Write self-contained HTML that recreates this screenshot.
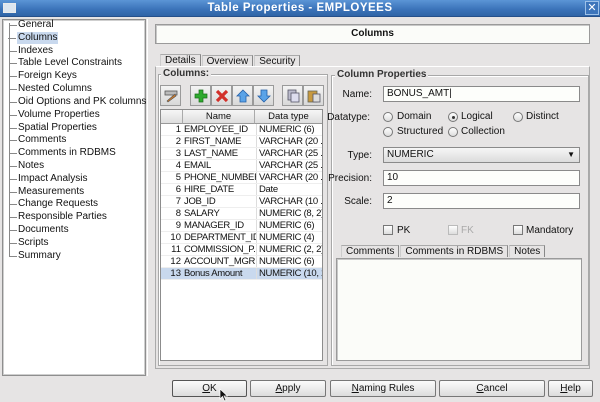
<!DOCTYPE html>
<html><head><meta charset="utf-8"><style>
*{margin:0;padding:0;box-sizing:border-box}
body{width:600px;height:402px;overflow:hidden;background:#e6e4e4;font-family:"Liberation Sans","DejaVu Sans",sans-serif;font-size:10px;color:#111;position:relative;white-space:nowrap}
.a{position:absolute}
#title{left:0;top:0;width:600px;height:17px;background:linear-gradient(#5b95d6,#3a72b8 60%,#2f64a6);border-bottom:1px solid #25508a}
#title span{position:absolute;left:0;width:600px;text-align:center;top:2px;color:#fff;font-weight:bold;font-size:11.5px;letter-spacing:.5px}
#tree{left:2px;top:19px;width:144px;height:357px;background:#fff;border:1px solid #8e8e8e;box-shadow:inset 0 0 0 1px #cfcfcf}
.ti{position:absolute;left:18px;height:12px;line-height:12px;white-space:nowrap}
.ti:before{content:"";position:absolute;left:-9px;top:6px;width:8px;border-top:1px solid #888}
.sel{background:#c9d9ee;padding:0 1px;left:17px}
.vl{left:9px;top:23px;height:233px;border-left:1px solid #888}
.box{background:#fbfcf9;border:1px solid #9a9a9a;box-shadow:inset 1px 1px 0 #c8c8c8}
.fs{border:1px solid #a8a8a8;box-shadow:1px 1px 0 #fff inset}
.leg{background:#e6e4e4;padding:0 2px;font-weight:bold;color:#333}
.tabs{position:absolute;display:flex}
.tab{height:12px;line-height:11px;padding:0 4px;border-top:1px solid #aaa;border-right:1px solid #888;border-left:1px solid #ccc;margin-right:1px}
.tb{position:absolute;top:85px;width:21px;height:21px;border:1px solid #9a9a9a;background:linear-gradient(#f4f4f4,#d8d8d8)}
.tb svg{position:absolute;left:3px;top:3px}
#tbl{left:160px;top:109px;width:163px;height:252px;background:#fff;border:1px solid #8c8c8c;overflow:hidden;font-size:9.5px}
.hr{position:absolute;top:0;height:14px;background:linear-gradient(#f6f6f6,#dedede);border-right:1px solid #aaa;border-bottom:1px solid #999;text-align:center;line-height:13px}
.r{position:absolute;left:0;width:161px;height:12px;line-height:12px;border-bottom:1px solid #eee;overflow:hidden}
.r b{font-weight:normal;position:absolute;right:141px}
.r i{font-style:normal;position:absolute;left:23px;width:72px;overflow:hidden;letter-spacing:-.3px}
.r u{text-decoration:none;position:absolute;left:95px;border-left:1px solid #ddd;padding-left:2px;height:12px;width:66px;overflow:hidden;letter-spacing:-.3px}
.lbl{position:absolute;text-align:right;width:50px;left:322px}
.in{position:absolute;left:383px;width:197px;height:16px;background:#fdfefb;border:1px solid #8a8a8a;padding-left:3px;line-height:14px}
.rd{position:absolute;width:10px;height:10px;border-radius:50%;border:1px solid #777;background:linear-gradient(#fff,#ddd)}
.ck{position:absolute;width:10px;height:10px;border:1px solid #777;background:linear-gradient(#fff,#ddd)}
.btn{position:absolute;top:380px;height:17px;border:1px solid #777;border-radius:2px;background:linear-gradient(#fbfbfb,#dcdcdc);text-align:center;line-height:15px}
</style></head><body>
<div id="title" class="a"><div class="a" style="left:3px;top:3px;width:13px;height:10px;border:1px solid #eaeaea;background:#dde6f0"></div><span>Table Properties - EMPLOYEES</span><div class="a" style="left:585px;top:1px;width:14px;height:14px;border:1px solid #9cc0e8;background:#3d75bb;color:#fff;font-weight:bold;font-size:11px;line-height:12px;text-align:center">✕</div></div>
<div id="tree" class="a"></div>
<div class="a vl"></div>
<div class="a" style="left:0;top:2px">
<div class="ti" style="top:17px">General</div>
<div class="ti sel" style="top:30px">Columns</div>
<div class="ti" style="top:43px">Indexes</div>
<div class="ti" style="top:55px">Table Level Constraints</div>
<div class="ti" style="top:68px">Foreign Keys</div>
<div class="ti" style="top:81px">Nested Columns</div>
<div class="ti" style="top:94px">Oid Options and PK columns</div>
<div class="ti" style="top:107px">Volume Properties</div>
<div class="ti" style="top:120px">Spatial Properties</div>
<div class="ti" style="top:132px">Comments</div>
<div class="ti" style="top:145px">Comments in RDBMS</div>
<div class="ti" style="top:158px">Notes</div>
<div class="ti" style="top:171px">Impact Analysis</div>
<div class="ti" style="top:184px">Measurements</div>
<div class="ti" style="top:196px">Change Requests</div>
<div class="ti" style="top:209px">Responsible Parties</div>
<div class="ti" style="top:222px">Documents</div>
<div class="ti" style="top:235px">Scripts</div>
<div class="ti" style="top:248px">Summary</div>
</div>
<div class="a" style="left:147px;top:19px;width:1px;height:357px;background:#fff"></div>
<div class="a box" style="left:155px;top:24px;width:435px;height:20px;text-align:center;line-height:18px;font-weight:bold">Columns</div>
<div class="tabs" style="left:160px;top:54px"><div class="tab" style="height:13px">Details</div><div class="tab" style="margin-top:1px">Overview</div><div class="tab" style="margin-top:1px">Security</div></div>
<div class="a" style="left:155px;top:66px;width:435px;height:303px;border:1px solid #aaa;border-top-color:#fff"></div>
<div class="a fs" style="left:158px;top:74px;width:170px;height:292px"></div>
<div class="a leg" style="left:161px;top:68px">Columns:</div>
<div class="tb" style="left:160px"><svg width="14" height="14"><rect x="1" y="2" width="12" height="4" fill="#bbb" stroke="#555" stroke-width=".8"/><path d="M3 12 L11 5 L12 7 L4 13Z" fill="#c87a30" stroke="#555" stroke-width=".6"/></svg></div>
<div class="tb" style="left:190px"><svg width="14" height="14"><path d="M5 1h4v4h4v4h-4v4h-4v-4h-4v-4h4z" fill="#2eaa2e" stroke="#1a6e1a" stroke-width=".7"/></svg></div>
<div class="tb" style="left:211px"><svg width="14" height="14"><path d="M2 2L12 12M12 2L2 12" stroke="#d2302a" stroke-width="3.2"/></svg></div>
<div class="tb" style="left:232px"><svg width="14" height="14"><path d="M7 1L13 7H10V13H4V7H1Z" fill="#5aa3e8" stroke="#2560a8" stroke-width=".8"/></svg></div>
<div class="tb" style="left:253px"><svg width="14" height="14"><path d="M7 13L13 7H10V1H4V7H1Z" fill="#5aa3e8" stroke="#2560a8" stroke-width=".8"/></svg></div>
<div class="tb" style="left:282px"><svg width="14" height="14"><rect x="2" y="1" width="8" height="10" fill="#bbc" stroke="#556" stroke-width=".8"/><rect x="5" y="4" width="8" height="9" fill="#dde" stroke="#556" stroke-width=".8"/></svg></div>
<div class="tb" style="left:303px"><svg width="14" height="14"><rect x="1" y="2" width="9" height="11" fill="#c89a40" stroke="#665" stroke-width=".8"/><rect x="6" y="5" width="7" height="8" fill="#ddd" stroke="#556" stroke-width=".8"/></svg></div>
<div id="tbl" class="a">
<div class="hr" style="left:0;width:22px"></div>
<div class="hr" style="left:22px;width:72px">Name</div>
<div class="hr" style="left:94px;width:67px;border-right:0">Data type</div>
<div class="r" style="top:14px"><b>1</b><i>EMPLOYEE_ID</i><u>NUMERIC (6)</u></div>
<div class="r" style="top:26px"><b>2</b><i>FIRST_NAME</i><u>VARCHAR (20 ...</u></div>
<div class="r" style="top:38px"><b>3</b><i>LAST_NAME</i><u>VARCHAR (25 ...</u></div>
<div class="r" style="top:50px"><b>4</b><i>EMAIL</i><u>VARCHAR (25 ...</u></div>
<div class="r" style="top:62px"><b>5</b><i>PHONE_NUMBER</i><u>VARCHAR (20 ...</u></div>
<div class="r" style="top:74px"><b>6</b><i>HIRE_DATE</i><u>Date</u></div>
<div class="r" style="top:86px"><b>7</b><i>JOB_ID</i><u>VARCHAR (10 ...</u></div>
<div class="r" style="top:98px"><b>8</b><i>SALARY</i><u>NUMERIC (8, 2)</u></div>
<div class="r" style="top:110px"><b>9</b><i>MANAGER_ID</i><u>NUMERIC (6)</u></div>
<div class="r" style="top:122px"><b>10</b><i>DEPARTMENT_ID</i><u>NUMERIC (4)</u></div>
<div class="r" style="top:134px"><b>11</b><i>COMMISSION_P...</i><u>NUMERIC (2, 2)</u></div>
<div class="r" style="top:146px"><b>12</b><i>ACCOUNT_MGR</i><u>NUMERIC (6)</u></div>
<div class="r" style="top:158px;background:#c9d9ee"><b>13</b><i>Bonus Amount</i><u>NUMERIC (10, 2)</u></div>
</div>
<div class="a fs" style="left:331px;top:75px;width:258px;height:291px"></div>
<div class="a leg" style="left:335px;top:69px">Column Properties</div>
<div class="lbl" style="top:89px">Name:</div><div class="in" style="top:86px">BONUS_AMT|</div>
<div class="lbl" style="top:112px;width:52px;left:318px">Datatype:</div>
<div class="rd" style="left:383px;top:112px"></div><div class="a" style="left:397px;top:111px">Domain</div>
<div class="rd" style="left:448px;top:112px"><div class="a" style="left:3px;top:3px;width:3px;height:3px;border-radius:50%;background:#333"></div></div><div class="a" style="left:461px;top:111px">Logical</div>
<div class="rd" style="left:513px;top:112px"></div><div class="a" style="left:526px;top:111px">Distinct</div>
<div class="rd" style="left:383px;top:127px"></div><div class="a" style="left:397px;top:126px">Structured</div>
<div class="rd" style="left:448px;top:127px"></div><div class="a" style="left:461px;top:126px">Collection</div>
<div class="lbl" style="top:150px">Type:</div>
<div class="in" style="top:147px;background:linear-gradient(#f6f6f6,#dcdcdc)">NUMERIC<span class="a" style="right:4px;top:0;font-size:8px">▼</span></div>
<div class="lbl" style="top:173px;left:320px;width:52px">Precision:</div><div class="in" style="top:170px">10</div>
<div class="lbl" style="top:196px">Scale:</div><div class="in" style="top:193px">2</div>
<div class="ck" style="left:383px;top:225px"></div><div class="a" style="left:397px;top:225px">PK</div>
<div class="ck" style="left:448px;top:225px;border-color:#bbb"></div><div class="a" style="left:461px;top:225px;color:#aaa">FK</div>
<div class="ck" style="left:513px;top:225px"></div><div class="a" style="left:526px;top:225px">Mandatory</div>
<div class="tabs" style="left:341px;top:245px"><div class="tab">Comments</div><div class="tab">Comments in RDBMS</div><div class="tab">Notes</div></div>
<div class="a box" style="left:336px;top:258px;width:246px;height:103px"></div>
<div class="btn" style="left:172px;width:75px;border-color:#555"><u>O</u>K</div>
<div class="btn" style="left:250px;width:76px"><u>A</u>pply</div>
<div class="btn" style="left:330px;width:106px"><u>N</u>aming Rules</div>
<div class="btn" style="left:439px;width:106px"><u>C</u>ancel</div>
<div class="btn" style="left:548px;width:45px"><u>H</u>elp</div>
<svg class="a" style="left:219px;top:388px" width="9" height="14"><path d="M1 1V11L3.5 8.5L5.5 13L7 12.3L5 8H8.5Z" fill="#111" stroke="#fff" stroke-width=".7"/></svg>
</body></html>
